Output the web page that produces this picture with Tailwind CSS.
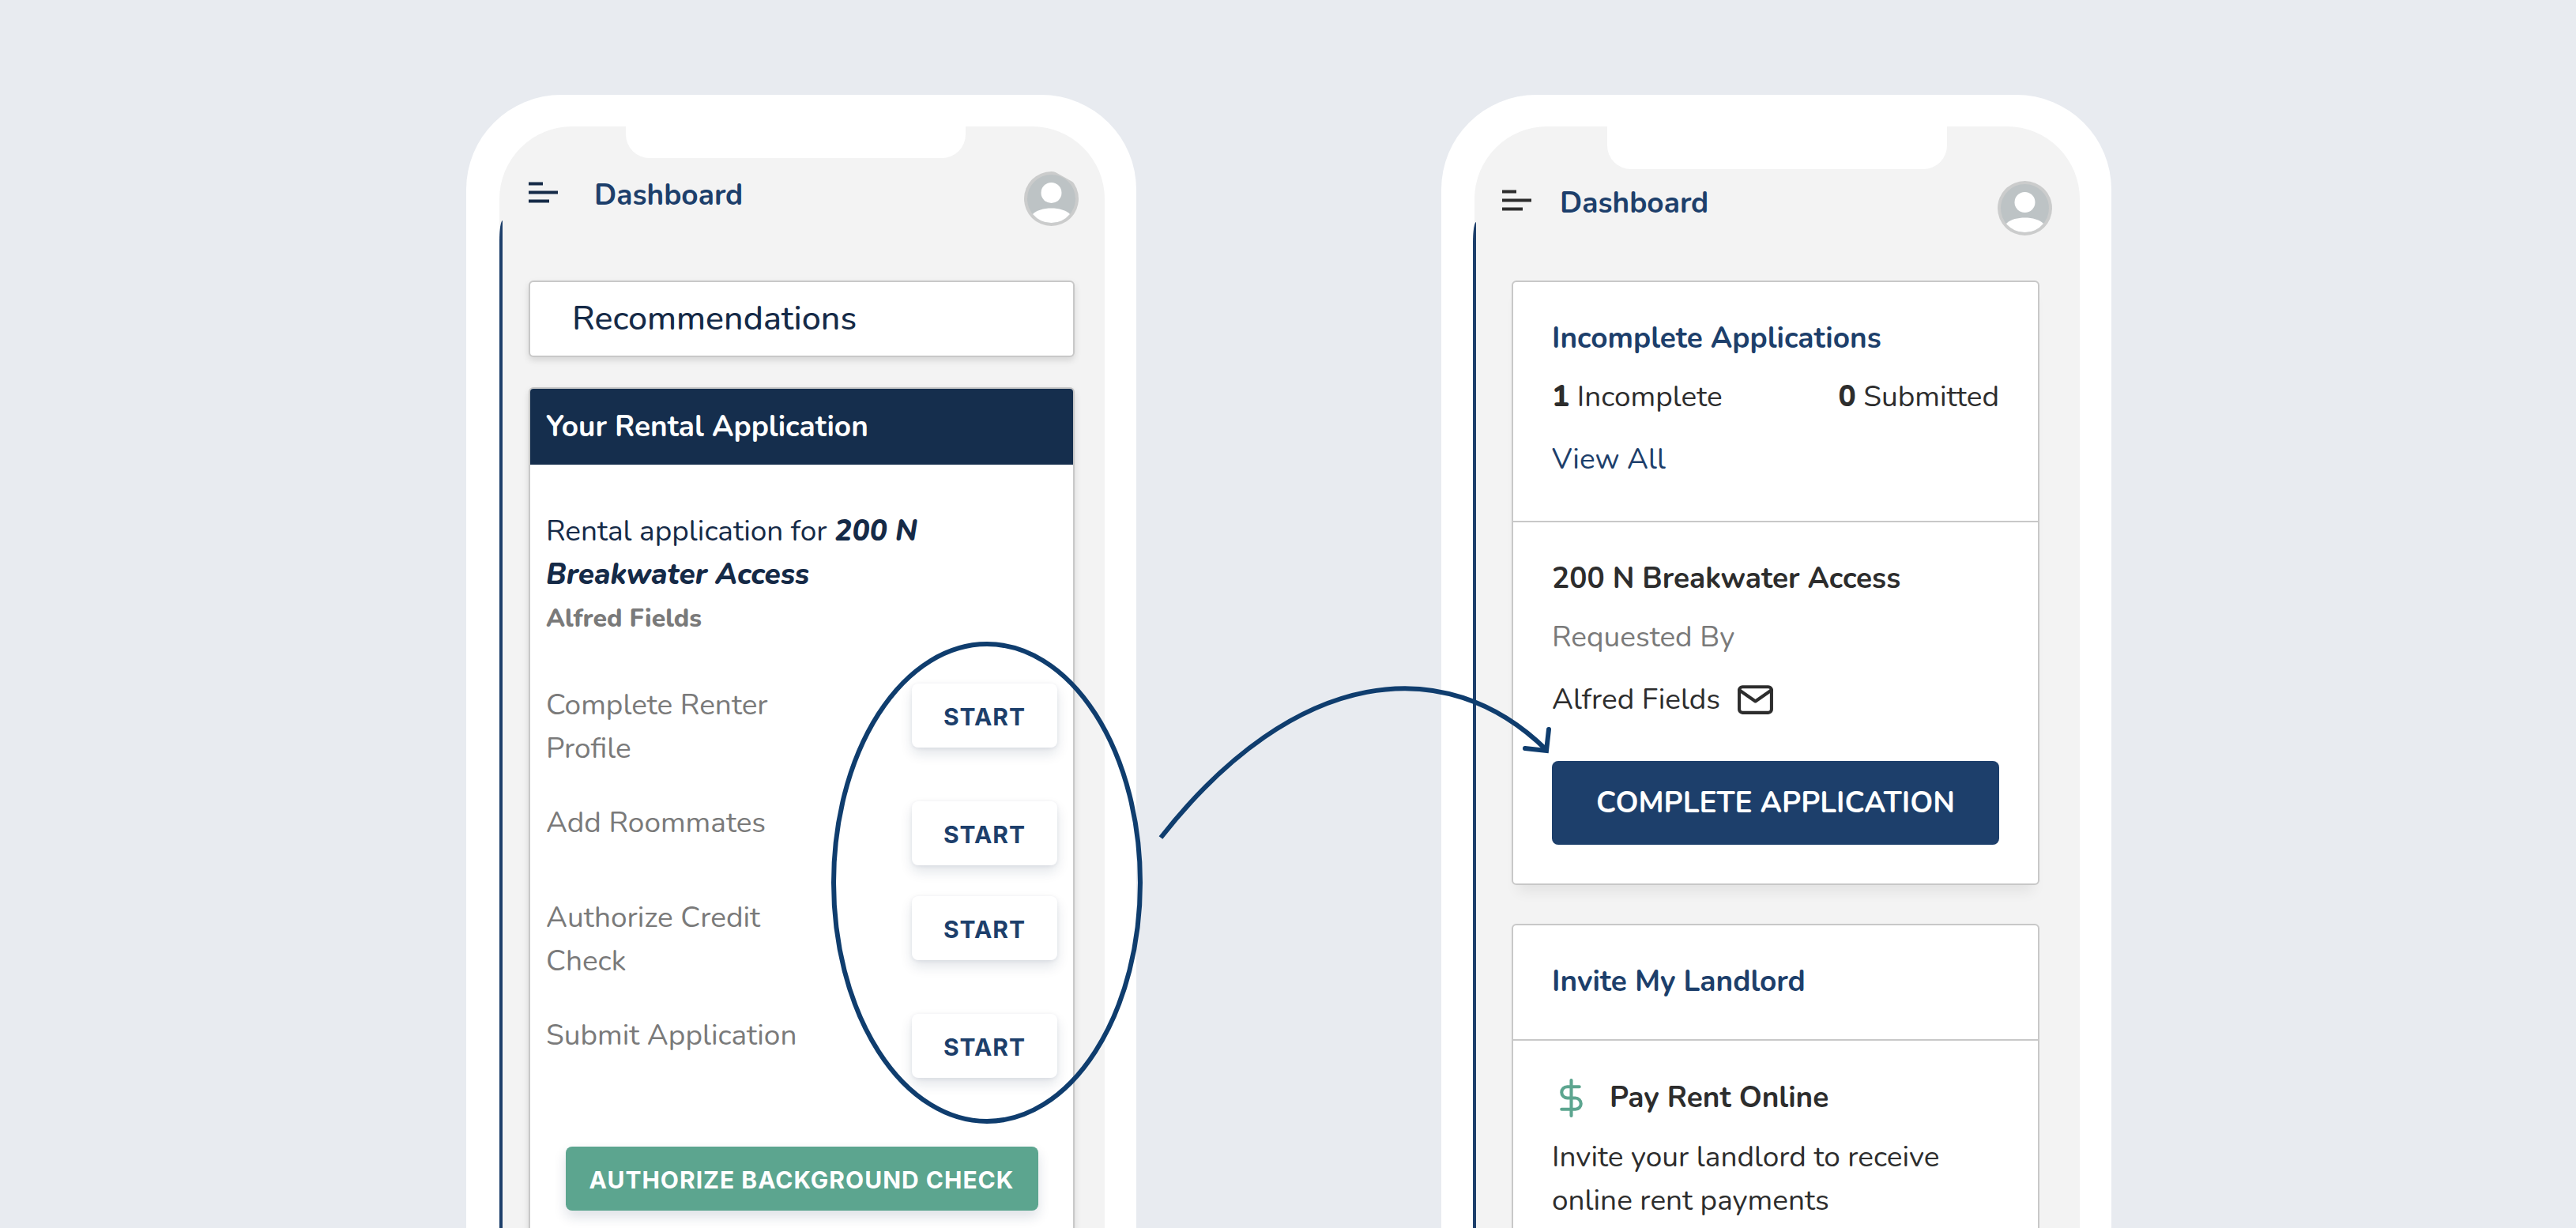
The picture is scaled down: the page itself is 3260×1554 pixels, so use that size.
<!DOCTYPE html>
<html lang="en">
<head>
<meta charset="utf-8">
<meta name="viewport" content="width=device-width, initial-scale=1">
<title>Renter dashboard</title>
<script src="https://cdn.jsdelivr.net/npm/@tailwindcss/browser@4"></script>
</head>
<body class="bg-[#e8ebf0] font-['Nunito','Open_Sans',sans-serif] text-[37px] leading-[55px] text-[#2d2d2d]">
<main class="flex h-screen justify-center overflow-hidden pt-[120px] pl-0.5">
  <div class="relative flex gap-[386px]">

    <!-- Task list dashboard -->
    <section class="w-[848px] shrink-0 rounded-t-[120px] bg-white pt-10 pr-10 pl-[42px]">
      <div class="relative h-full overflow-hidden rounded-t-[92px] bg-[#f3f3f3]">
        <div class="absolute top-0 left-[160px] h-10 w-[430px] rounded-b-[30px] bg-white"></div>
        <div class="absolute top-[119px] bottom-0 left-0 w-1 rounded-tl-[4px_26px] bg-[#1d3f6b]"></div>
        <header class="flex items-center pt-[57px] pr-[33px] pl-[37px]">
          <button type="button" aria-label="Menu" class="pb-4">
            <svg class="h-[27px] w-[37px]" viewBox="0 0 37 27" fill="#152a47"><path d="M0 .5h18v4H0zM0 11.500h37v4H0zM0 22.500h26v4H0z"/></svg>
          </button>
          <h1 class="ml-[46px] pb-2 font-bold text-[#1d3f6b]">Dashboard</h1>
          <button type="button" aria-label="Account" class="ml-auto">
            <svg class="size-[69px]" viewBox="0 0 69 69"><circle cx="34.5" cy="34.5" r="34.5" fill="#cbcccc"/><circle cx="34.5" cy="34.5" r="30.5" fill="#bdc3c5"/><circle cx="34.5" cy="27" r="13" fill="#fff"/><path d="M11 54C20 44 49 44 58 54A30.500 30.500 0 0 1 11 54z" fill="#fff"/><path d="M38 0L63 14L69 14V0z" fill="#f3f3f3"/></svg>
          </button>
        </header>

        <div class="mt-[69px] mr-[38px] ml-[37px] flex flex-col gap-[38px]">
          <div class="flex h-[97px] items-center rounded-md border-2 border-[#c8c8c8] bg-white px-[53px] shadow-[0_4px_8px_rgba(0,0,0,0.12)]">
            <h2 class="text-[43px] font-medium text-[#152a47]">Recommendations</h2>
          </div>

          <div class="overflow-hidden rounded-t-md border-2 border-[#c8c8c8] bg-white pb-24 shadow-[0_4px_8px_rgba(0,0,0,0.12)]">
            <h2 class="flex h-24 items-center bg-[#152e4d] px-5 font-bold text-white">Your Rental Application</h2>
            <div class="flex flex-col px-5 pt-[57px]">
              <p class="text-[#152a47]">Rental application for <em class="font-extrabold">200 N Breakwater Access</em></p>
              <p class="text-[32px] font-extrabold text-[#7a7a7a]">Alfred Fields</p>
              <ul class="mt-[55px] flex flex-col gap-[39px] text-[#7a7a7a]">
                <li class="flex items-start justify-between">
                  <span class="w-[330px]">Complete Renter Profile</span>
                  <button type="button" class="h-[81px] w-[184px] rounded-lg bg-white pt-1 font-['Inter',sans-serif] text-[30px] font-bold tracking-[1px] text-[#1d3f6b] shadow-[0_8px_16px_rgba(20,40,75,0.12),0_1px_5px_rgba(20,40,75,0.08)]">START</button>
                </li>
                <li class="flex items-start justify-between">
                  <span class="w-[330px]">Add Roommates</span>
                  <button type="button" class="h-[81px] w-[184px] rounded-lg bg-white pt-1 font-['Inter',sans-serif] text-[30px] font-bold tracking-[1px] text-[#1d3f6b] shadow-[0_8px_16px_rgba(20,40,75,0.12),0_1px_5px_rgba(20,40,75,0.08)]">START</button>
                </li>
                <li class="flex items-start justify-between">
                  <span class="w-[330px]">Authorize Credit Check</span>
                  <button type="button" class="h-[81px] w-[184px] rounded-lg bg-white pt-1 font-['Inter',sans-serif] text-[30px] font-bold tracking-[1px] text-[#1d3f6b] shadow-[0_8px_16px_rgba(20,40,75,0.12),0_1px_5px_rgba(20,40,75,0.08)]">START</button>
                </li>
                <li class="flex items-start justify-between">
                  <span class="w-[330px]">Submit Application</span>
                  <button type="button" class="h-[81px] w-[184px] rounded-lg bg-white pt-1 font-['Inter',sans-serif] text-[30px] font-bold tracking-[1px] text-[#1d3f6b] shadow-[0_8px_16px_rgba(20,40,75,0.12),0_1px_5px_rgba(20,40,75,0.08)]">START</button>
                </li>
              </ul>
              <button type="button" class="mt-[87px] h-[81px] w-[598px] self-center rounded-lg bg-[#5ca58f] pt-1 font-['Inter',sans-serif] text-[30px] font-bold tracking-[1px] text-white shadow-[0_8px_16px_rgba(20,40,75,0.14)]">AUTHORIZE BACKGROUND CHECK</button>
            </div>
          </div>
        </div>
      </div>
    </section>

    <!-- Single action dashboard -->
    <section class="w-[848px] shrink-0 rounded-t-[120px] bg-white pt-10 pr-10 pl-[42px]">
      <div class="relative h-full rounded-t-[92px] bg-[#f3f3f3]">
        <div class="absolute top-0 left-[168px] h-[54px] w-[430px] rounded-b-[30px] bg-white"></div>
        <div class="absolute top-[121px] bottom-0 -left-0.5 w-1 rounded-tl-[4px_26px] bg-[#1d3f6b]"></div>
        <header class="flex items-center pt-[69px] pr-[35px] pl-[35px]">
          <button type="button" aria-label="Menu" class="pb-5">
            <svg class="h-[27px] w-[37px]" viewBox="0 0 37 27" fill="#2d2d2d"><path d="M0 .5h18v4H0zM0 11.500h37v4H0zM0 22.500h26v4H0z"/></svg>
          </button>
          <h1 class="ml-9 pb-3 font-bold text-[#1d3f6b]">Dashboard</h1>
          <button type="button" aria-label="Account" class="ml-auto">
            <svg class="size-[69px]" viewBox="0 0 69 69"><circle cx="34.5" cy="34.5" r="34.5" fill="#cbcccc"/><circle cx="34.5" cy="34.5" r="30.5" fill="#bdc3c5"/><circle cx="34.5" cy="27" r="13" fill="#fff"/><path d="M11 54C20 44 49 44 58 54A30.500 30.500 0 0 1 11 54z" fill="#fff"/></svg>
          </button>
        </header>

        <div class="mt-[57px] mr-[51px] ml-[47px] flex flex-col gap-[49px]">
          <article class="rounded-md border-2 border-[#c8c8c8] bg-white shadow-[0_16px_16px_-8px_rgba(0,0,0,0.07)]">
            <div class="border-b-2 border-[#c8c8c8] px-[49px] pt-11 pb-[50px]">
              <h2 class="font-bold text-[#1d3f6b]">Incomplete Applications</h2>
              <div class="mt-[19px] flex justify-between">
                <p><strong class="font-extrabold">1</strong> Incomplete</p>
                <p><strong class="font-extrabold">0</strong> Submitted</p>
              </div>
              <p class="mt-6"><a href="#applications" class="text-[#1d3f6b]">View All</a></p>
            </div>
            <div class="px-[49px] pt-11 pb-[49px]">
              <h3 class="font-bold">200 N Breakwater Access</h3>
              <p class="mt-[19px] text-[#7a7a7a]">Requested By</p>
              <div class="mt-6 flex items-center gap-5">
                <p>Alfred Fields</p>
                <a href="#message" aria-label="Email Alfred Fields"><svg class="size-[49px]" viewBox="0 0 24 24" fill="none" stroke="#2d2d2d" stroke-width="2" stroke-linecap="round" stroke-linejoin="round"><rect x="2" y="4" width="20" height="16" rx="2"/><path d="M22 6l-10 7L2 6"/></svg></a>
              </div>
              <button type="button" class="mt-[50px] h-[106px] w-full rounded-lg bg-[#1d3f6b] font-bold text-white">COMPLETE APPLICATION</button>
            </div>
          </article>

          <article class="rounded-t-md border-2 border-[#c8c8c8] bg-white">
            <h2 class="border-b-2 border-[#c8c8c8] px-[49px] pt-11 pb-[45px] font-bold text-[#1d3f6b]">Invite My Landlord</h2>
            <div class="px-[49px] pt-[45px] pb-20">
              <div class="flex items-center gap-6">
                <svg class="size-[49px]" viewBox="0 0 24 24" fill="none" stroke="#5ca58f" stroke-width="2" stroke-linecap="round" stroke-linejoin="round"><path d="M12 1v22M17 5H9.500a3.500 3.500 0 0 0 0 7h5a3.500 3.500 0 0 1 0 7H6"/></svg>
                <h3 class="font-bold">Pay Rent Online</h3>
              </div>
              <p class="mt-5">Invite your landlord to receive online rent payments</p>
            </div>
          </article>
        </div>
      </div>
    </section>

    <!-- Annotation: buttons on the left become one action on the right -->
    <svg class="pointer-events-none absolute top-0 left-0 h-[1434px] w-[2082px]" viewBox="0 0 2082 1434" fill="none" stroke="#0f3d6e" stroke-width="6" aria-hidden="true">
      <ellipse cx="659" cy="997" rx="194" ry="302"/>
      <path d="M879 940C1050 722 1240 704 1367 829"/>
      <path d="M1370 803L1367 830L1340 827" stroke-linecap="round"/>
    </svg>
  </div>
</main>
</body>
</html>
